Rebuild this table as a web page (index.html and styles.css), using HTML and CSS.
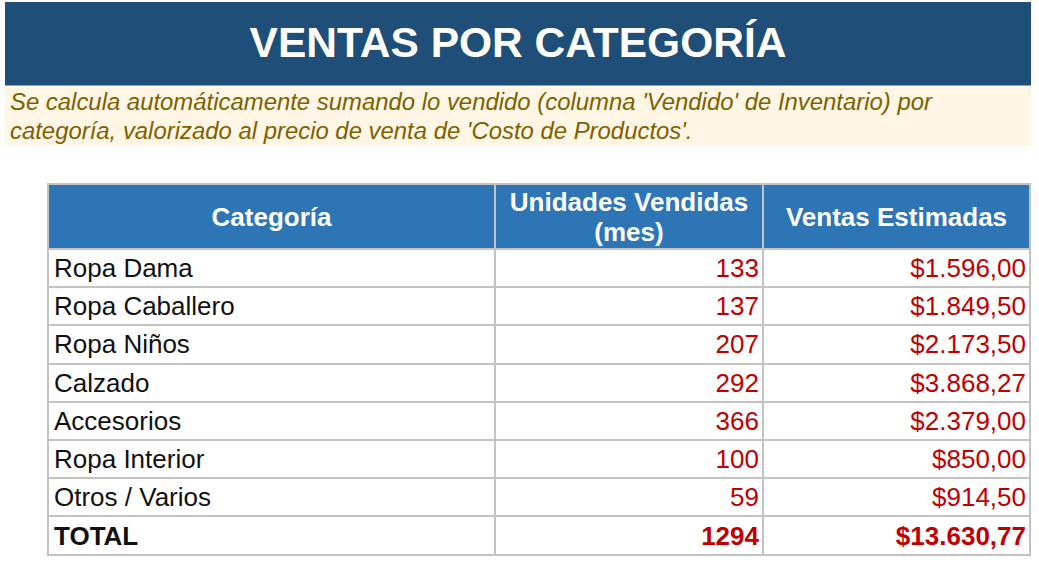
FILE: index.html
```html
<!DOCTYPE html>
<html lang="es">
<head>
<meta charset="utf-8">
<title>Ventas por Categoría</title>
<link rel="stylesheet" href="styles.css">
</head>
<body>
<div class="page">
  <header class="title-bar">VENTAS POR CATEGORÍA</header>
  <p class="note">Se calcula automáticamente sumando lo vendido (columna 'Vendido' de Inventario) por categoría, valorizado al precio de venta de 'Costo de Productos'.</p>
  <table class="sales">
    <colgroup>
      <col class="c-cat">
      <col class="c-units">
      <col class="c-sales">
    </colgroup>
    <thead>
      <tr>
        <th>Categoría</th>
        <th>Unidades Vendidas (mes)</th>
        <th>Ventas Estimadas</th>
      </tr>
    </thead>
    <tbody>
      <tr><td>Ropa Dama</td><td class="num">133</td><td class="num">$1.596,00</td></tr>
      <tr><td>Ropa Caballero</td><td class="num">137</td><td class="num">$1.849,50</td></tr>
      <tr><td>Ropa Niños</td><td class="num">207</td><td class="num">$2.173,50</td></tr>
      <tr><td>Calzado</td><td class="num">292</td><td class="num">$3.868,27</td></tr>
      <tr><td>Accesorios</td><td class="num">366</td><td class="num">$2.379,00</td></tr>
      <tr><td>Ropa Interior</td><td class="num">100</td><td class="num">$850,00</td></tr>
      <tr><td>Otros / Varios</td><td class="num">59</td><td class="num">$914,50</td></tr>
      <tr class="total"><td>TOTAL</td><td class="num">1294</td><td class="num">$13.630,77</td></tr>
    </tbody>
  </table>
</div>
</body>
</html>
```
FILE: styles.css
```css
* { box-sizing: border-box; }
html, body { margin: 0; padding: 0; background: #ffffff; }
body { font-family: "Liberation Sans", Arial, sans-serif; }

.page {
  padding: 2px 8px 0 5px;
  display: flex;
  flex-direction: column;
  align-items: flex-start;
}

.title-bar {
  width: 1026px;
  height: 84px;
  background: #1f4e79;
  color: #ffffff;
  font-weight: bold;
  font-size: 42.5px;
  display: flex;
  align-items: center;
  justify-content: center;
  padding-bottom: 2px;
  border-bottom: 1px solid #8ea3b8;
}

.note {
  margin: 0;
  width: 1026px;
  height: 60px;
  background: #fff6e5;
  color: #7f6000;
  font-style: italic;
  font-size: 23.9px;
  line-height: 29px;
  padding: 1px 5px 0 5px;
}

.sales {
  margin: 37px 0 0 42px;
  width: 982px;
  border-collapse: separate;
  border-spacing: 0;
  table-layout: fixed;
  border-top: 2px solid #c3c3c3;
  border-left: 2px solid #c3c3c3;
  font-size: 26px;
}
.c-cat { width: 447px; }
.c-units { width: 268px; }
.c-sales { width: 267px; }

.sales th, .sales td {
  border-right: 2px solid #c3c3c3;
  border-bottom: 2px solid #c3c3c3;
  line-height: 30px;
  vertical-align: middle;
}

.sales th {
  background: #2e75b6;
  color: #ffffff;
  font-weight: bold;
  height: 65px;
  padding: 0 2px;
  text-align: center;
}

.sales td {
  height: 38.2px;
  padding: 0 3px 0 5px;
  color: #111111;
}
.sales td.num {
  text-align: right;
  color: #c00000;
}
.sales tr.total td {
  font-weight: bold;
  height: 39px;
}
```
